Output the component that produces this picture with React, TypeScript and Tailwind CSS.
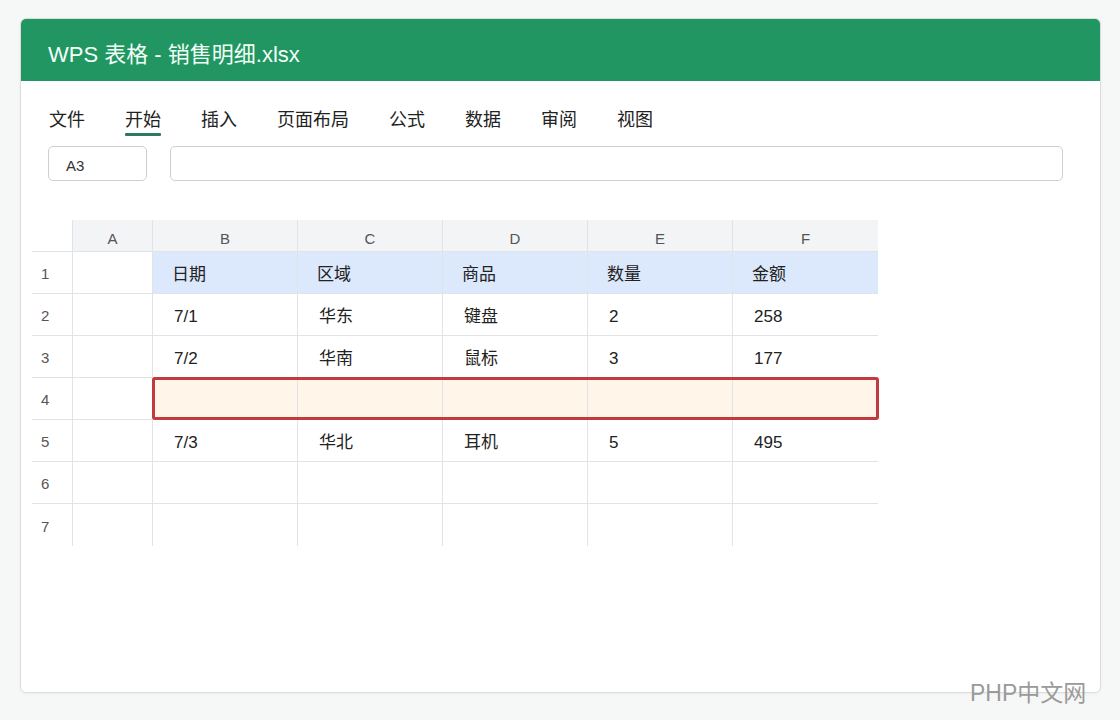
import React from "react";

const cols = ["A", "B", "C", "D", "E", "F"];
const widths = [80, 145, 145, 145, 145, 146];

type Row = { n: number; cells: string[]; kind?: "head" | "sel" };
const rows: Row[] = [
  { n: 1, cells: ["", "日期", "区域", "商品", "数量", "金额"], kind: "head" },
  { n: 2, cells: ["", "7/1", "华东", "键盘", "2", "258"] },
  { n: 3, cells: ["", "7/2", "华南", "鼠标", "3", "177"] },
  { n: 4, cells: ["", "", "", "", "", ""], kind: "sel" },
  { n: 5, cells: ["", "7/3", "华北", "耳机", "5", "495"] },
  { n: 6, cells: ["", "", "", "", "", ""] },
  { n: 7, cells: ["", "", "", "", "", ""] },
];

const menus = ["文件", "开始", "插入", "页面布局", "公式", "数据", "审阅", "视图"];

export default function App() {
  return (
    <div
      className="relative w-[1120px] h-[720px] bg-[#f6f7f7] pt-[18px] pl-[20px]"
      style={{ fontFamily: '"Liberation Sans", Arial, "Noto Sans CJK SC", sans-serif' }}
    >
      <div className="w-[1081px] h-[675px] bg-white rounded-[6px] border border-[#dcdcdc] overflow-hidden shadow-[0_1px_3px_rgba(0,0,0,0.04)]">
        <div className="h-[62px] bg-[#219662] flex items-center pl-[27px] pt-[8px] text-[22px] text-[#f2fff7]">
          WPS 表格 - 销售明细.xlsx
        </div>
        <div className="flex gap-[40px] pl-[28px] pt-[27px] text-[18px] text-[#222] leading-[24px]">
          {menus.map((m) => (
            <div key={m} className="relative">
              {m}
              {m === "开始" && (
                <div className="absolute left-0 right-0 top-[25px] h-[3px] bg-[#2b7a5c] rounded-[1px]" />
              )}
            </div>
          ))}
        </div>
        <div className="flex pl-[27px] pt-[14px] gap-[23px]">
          <div className="w-[99px] h-[35px] border border-[#cfcfcf] rounded-[5px] flex items-center pl-[17px] pt-[5px] text-[15px] text-[#333]">
            A3
          </div>
          <div className="w-[893px] h-[35px] border border-[#cfcfcf] rounded-[5px]" />
        </div>
        <div className="pl-[11px] pt-[39px]">
          <div className="flex h-[32px]">
            <div className="w-[40px] bg-white border-b border-[#e2e3e8]" />
            {cols.map((c, i) => (
              <div
                key={c}
                style={{ width: widths[i] }}
                className="bg-[#f3f4f6] border-b border-l border-[#e2e3e8] flex items-center justify-center pt-[7px] text-[15px] text-[#555]"
              >
                {c}
              </div>
            ))}
          </div>
          {rows.map((r) => (
            <div key={r.n} className="relative flex h-[42px]">
              <div
                className={`w-[40px] flex items-center pl-[9px] pt-[4px] text-[15px] text-[#555] ${
                  r.n !== 7 ? "border-b border-[#e2e3e8]" : ""
                }`}
              >
                {r.n}
              </div>
              {r.cells.map((v, i) => {
                const bg =
                  r.kind === "head" && i > 0
                    ? "bg-[#dce8fb]"
                    : r.kind === "sel" && i > 0
                    ? "bg-[#fff5e9]"
                    : "bg-white";
                return (
                  <div
                    key={i}
                    style={{ width: widths[i] }}
                    className={`${bg} border-l border-[#e2e3e8] ${
                      r.n !== 7 ? "border-b" : ""
                    } flex items-center pt-[5px] text-[17px] text-[#222] ${
                      r.kind === "head" ? "pl-[19px]" : "pl-[21px]"
                    }`}
                  >
                    {v}
                  </div>
                );
              })}
              {r.kind === "sel" && (
                <div className="absolute left-[120px] top-[-1px] w-[727px] h-[43px] border-[3px] border-[#c23a3e] rounded-[3px]" />
              )}
            </div>
          ))}
        </div>
      </div>
      <div className="absolute left-[970px] top-[678px] text-[23px] text-[#9a9a9a] leading-[30px]">
        PHP中文网
      </div>
    </div>
  );
}
